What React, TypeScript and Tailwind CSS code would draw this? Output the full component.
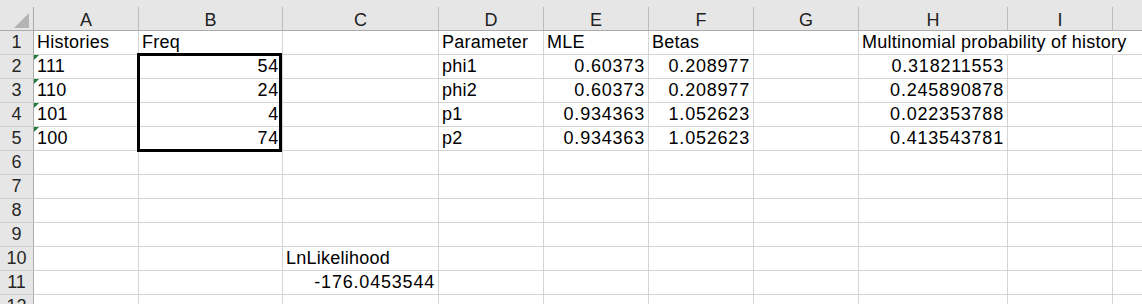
type Cell = { v: string; num?: boolean; tri?: boolean };

const COLS = [
  { name: "A", w: "w-[105px]" },
  { name: "B", w: "w-[144px]" },
  { name: "C", w: "w-[156px]" },
  { name: "D", w: "w-[105px]" },
  { name: "E", w: "w-[105px]" },
  { name: "F", w: "w-[105px]" },
  { name: "G", w: "w-[105px]" },
  { name: "H", w: "w-[149px]" },
  { name: "I", w: "w-[105px]" },
  { name: "", w: "w-[105px]" },
];

const t = (v: string, tri?: boolean): Cell => ({ v, tri });
const n = (v: string): Cell => ({ v, num: true });

const ROWS: Record<number, Cell>[] = [
  { 0: t("Histories"), 1: t("Freq"), 3: t("Parameter"), 4: t("MLE"), 5: t("Betas"), 7: t("Multinomial probability of history") },
  { 0: t("111", true), 1: n("54"), 3: t("phi1"), 4: n("0.60373"), 5: n("0.208977"), 7: n("0.318211553") },
  { 0: t("110", true), 1: n("24"), 3: t("phi2"), 4: n("0.60373"), 5: n("0.208977"), 7: n("0.245890878") },
  { 0: t("101", true), 1: n("4"), 3: t("p1"), 4: n("0.934363"), 5: n("1.052623"), 7: n("0.022353788") },
  { 0: t("100", true), 1: n("74"), 3: t("p2"), 4: n("0.934363"), 5: n("1.052623"), 7: n("0.413543781") },
  {},
  {},
  {},
  {},
  { 2: t("LnLikelihood") },
  { 2: n("-176.0453544") },
  {},
];

function GreenTick() {
  return (
    <svg className="absolute left-0 top-0" width="6" height="6" viewBox="0 0 6 6">
      <polygon points="0,0 5,0 0,5" fill="#1e7b3a" />
    </svg>
  );
}

function HeaderRow() {
  return (
    <div className="flex h-[31px] bg-[#e6e6e6] border-b border-[#ababab]">
      <div className="w-[34px] shrink-0 pt-[7px]">
        <div className="relative h-[23px] border-r border-[#ababab]">
          <svg className="absolute left-[14px] top-[6px]" width="16" height="16" viewBox="0 0 16 16">
            <polygon points="15,0 15,15 0,15" fill="#b4b4b4" />
          </svg>
        </div>
      </div>
      {COLS.map((c, i) => (
        <div key={i} className={`${c.w} shrink-0 pt-[7px]`}>
          <div className="h-[23px] border-r border-[#bcbcbc] pt-[3px] text-center leading-[20px] text-[#222]">
            {c.name}
          </div>
        </div>
      ))}
    </div>
  );
}

function DataRow({ idx, cells }: { idx: number; cells: Record<number, Cell> }) {
  return (
    <div className="flex h-[24px]">
      <div className="w-[34px] shrink-0 bg-[#e6e6e6] border-r border-b border-r-[#ababab] border-b-[#cfcfcf] text-center leading-[23px] text-[#262626]">
        {idx}
      </div>
      {COLS.map((c, i) => {
        const cell = cells[i];
        const spill = idx === 1 && (i === 7 || i === 8);
        return (
          <div
            key={i}
            className={`${c.w} relative shrink-0 border-b border-r border-[#d4d4d4] leading-[23px] whitespace-nowrap ${
              spill ? "border-r-transparent" : ""
            } ${cell?.num ? "text-right pr-[3px] tracking-[0.8px]" : "pl-[3px] tracking-[0.25px]"}`}
          >
            {cell?.tri && <GreenTick />}
            {cell?.v}
          </div>
        );
      })}
    </div>
  );
}

export default function App() {
  return (
    <div className="relative w-[1142px] h-[304px] overflow-hidden bg-white text-[18px] text-black font-['Liberation_Sans',Arial,sans-serif]">
      <HeaderRow />
      {ROWS.map((cells, i) => (
        <DataRow key={i} idx={i + 1} cells={cells} />
      ))}
      {/* thick box border around B2:B5 */}
      <div className="absolute left-[137px] top-[53px] w-[145px] h-[99px] border-[3px] border-black pointer-events-none" />
    </div>
  );
}
